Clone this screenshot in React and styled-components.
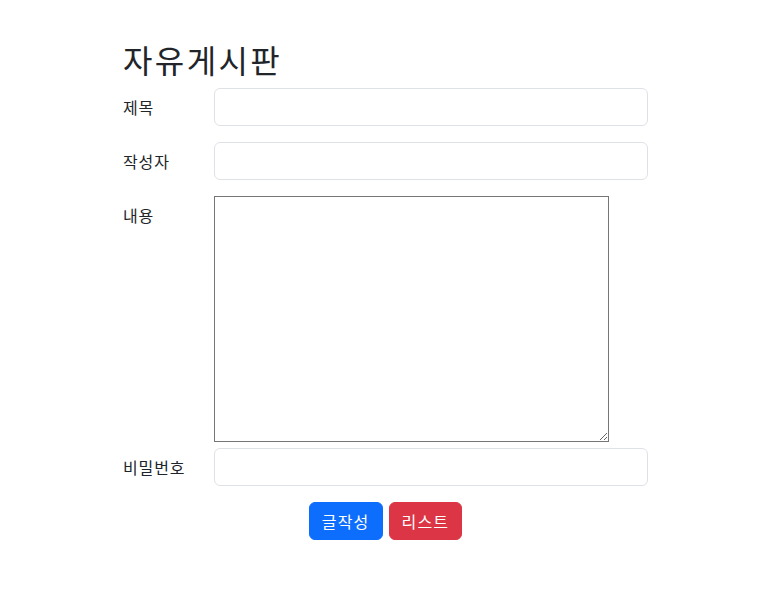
import React from "react";
import styled, { createGlobalStyle } from "styled-components";

const Global = createGlobalStyle`
  * { box-sizing: border-box; }
  body {
    margin: 0;
    background: #fff;
    color: #212529;
    font-family: "Noto Sans CJK KR", "Noto Sans", "Liberation Sans", sans-serif;
    font-size: 16px;
    line-height: 1.5;
    letter-spacing: 0.9px;
  }
`;

const Page = styled.div`
  padding: 40px 0 40px 123px;
`;

const Form = styled.form`
  width: 525px;
  display: flex;
  flex-direction: column;
`;

const Title = styled.h2`
  margin: 0 0 10px;
  font-size: 32px;
  font-weight: 400;
  line-height: 1.2;
  letter-spacing: 2.4px;
`;

const Row = styled.div`
  display: grid;
  grid-template-columns: 91px 1fr;
  align-items: start;
  margin-bottom: ${(p) => p.$gap}px;
`;

const Label = styled.label`
  padding-top: 7px;
  line-height: 24px;
  color: #212529;
`;

const Input = styled.input`
  display: block;
  width: 100%;
  height: 38px;
  padding: 6px 12px;
  font: inherit;
  border: 1px solid #dee2e6;
  border-radius: 6px;
  background: #fff;
  outline: none;
`;

const TextArea = styled.textarea`
  display: block;
  width: 395px;
  height: 246px;
  padding: 2px;
  font: inherit;
  border: 1px solid #767676;
  border-radius: 0;
  margin: 0;
`;

const Buttons = styled.div`
  display: flex;
  justify-content: center;
  gap: 6px;
`;

const Button = styled.button`
  height: 38px;
  padding: 6px 12px;
  font: inherit;
  font-size: 16px;
  line-height: 24px;
  letter-spacing: 1.2px;
  color: #fff;
  border: 1px solid ${(p) => p.$bg};
  background: ${(p) => p.$bg};
  border-radius: 6px;
  cursor: pointer;
`;

export default function App() {
  return (
    <>
      <Global />
      <Page>
        <Form onSubmit={(e) => e.preventDefault()}>
          <Title>자유게시판</Title>
          <Row $gap={16}>
            <Label>제목</Label>
            <Input type="text" />
          </Row>
          <Row $gap={16}>
            <Label>작성자</Label>
            <Input type="text" />
          </Row>
          <Row $gap={6}>
            <Label>내용</Label>
            <TextArea />
          </Row>
          <Row $gap={16}>
            <Label>비밀번호</Label>
            <Input type="password" />
          </Row>
          <Buttons>
            <Button type="submit" $bg="#0d6efd">글작성</Button>
            <Button type="button" $bg="#dc3545">리스트</Button>
          </Buttons>
        </Form>
      </Page>
    </>
  );
}
